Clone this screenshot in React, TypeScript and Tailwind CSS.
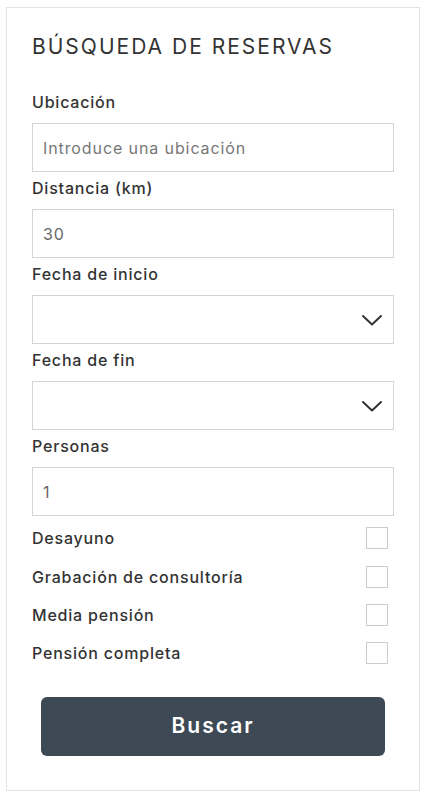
const font = { fontFamily: 'Inter, "DejaVu Sans", sans-serif' }

function Label({ children }: { children: React.ReactNode }) {
  return <div className="h-[24px] leading-[24px] text-[16px] font-medium tracking-[0.8px] text-[#333] mt-[4px] mb-[9px]">{children}</div>
}

function TextField({ value, placeholder }: { value?: string; placeholder?: string }) {
  return (
    <div className="h-[49px] border border-[#d4d4d4] flex items-center px-[10px] text-[16px] tracking-[0.9px]">
      {value ? <span className="text-[#666]">{value}</span> : <span className="text-[#777]">{placeholder}</span>}
    </div>
  )
}

function SelectField() {
  return (
    <div className="h-[49px] border border-[#d4d4d4] flex items-center justify-end pr-[10px]">
      <svg width="22" height="12" viewBox="0 0 22 12" fill="none" stroke="#333" strokeWidth="2" strokeLinecap="round" strokeLinejoin="round">
        <path d="M2 2l9 8.5L20 2" />
      </svg>
    </div>
  )
}

export default function App() {
  const extras = ['Desayuno', 'Grabación de consultoría', 'Media pensión', 'Pensión completa']

  return (
    <div className="min-h-[797px] bg-white pl-[6px] pt-[7px]" style={font}>
      <div className="w-[414px] border border-[#e2e2e2] px-[25px] pt-[25px] pb-[34px]">

        {/* Header */}
        <h2 className="h-[28px] leading-[28px] text-[21px] uppercase tracking-[2px] text-[#333] mb-[29px]">Búsqueda de reservas</h2>

        {/* Fields */}
        <Label>Ubicación</Label>
        <TextField placeholder="Introduce una ubicación" />

        <Label>Distancia (km)</Label>
        <TextField value="30" />

        <Label>Fecha de inicio</Label>
        <SelectField />

        <Label>Fecha de fin</Label>
        <SelectField />

        <Label>Personas</Label>
        <TextField value="1" />

        {/* Extras */}
        <div className="mt-[3px]">
          {extras.map((e) => (
            <div key={e} className="h-[38.4px] flex items-center justify-between">
              <span className="text-[16px] font-medium tracking-[0.8px] text-[#333]">{e}</span>
              <span className="w-[22px] h-[22px] border border-[#ccc] mr-[6px]" />
            </div>
          ))}
        </div>

        <button className="mt-[24px] mx-[9px] w-[344px] h-[59px] rounded-[6px] bg-[#3d4a56] text-white text-[21px] font-semibold tracking-[2px]">
          Buscar
        </button>
      </div>
    </div>
  )
}
